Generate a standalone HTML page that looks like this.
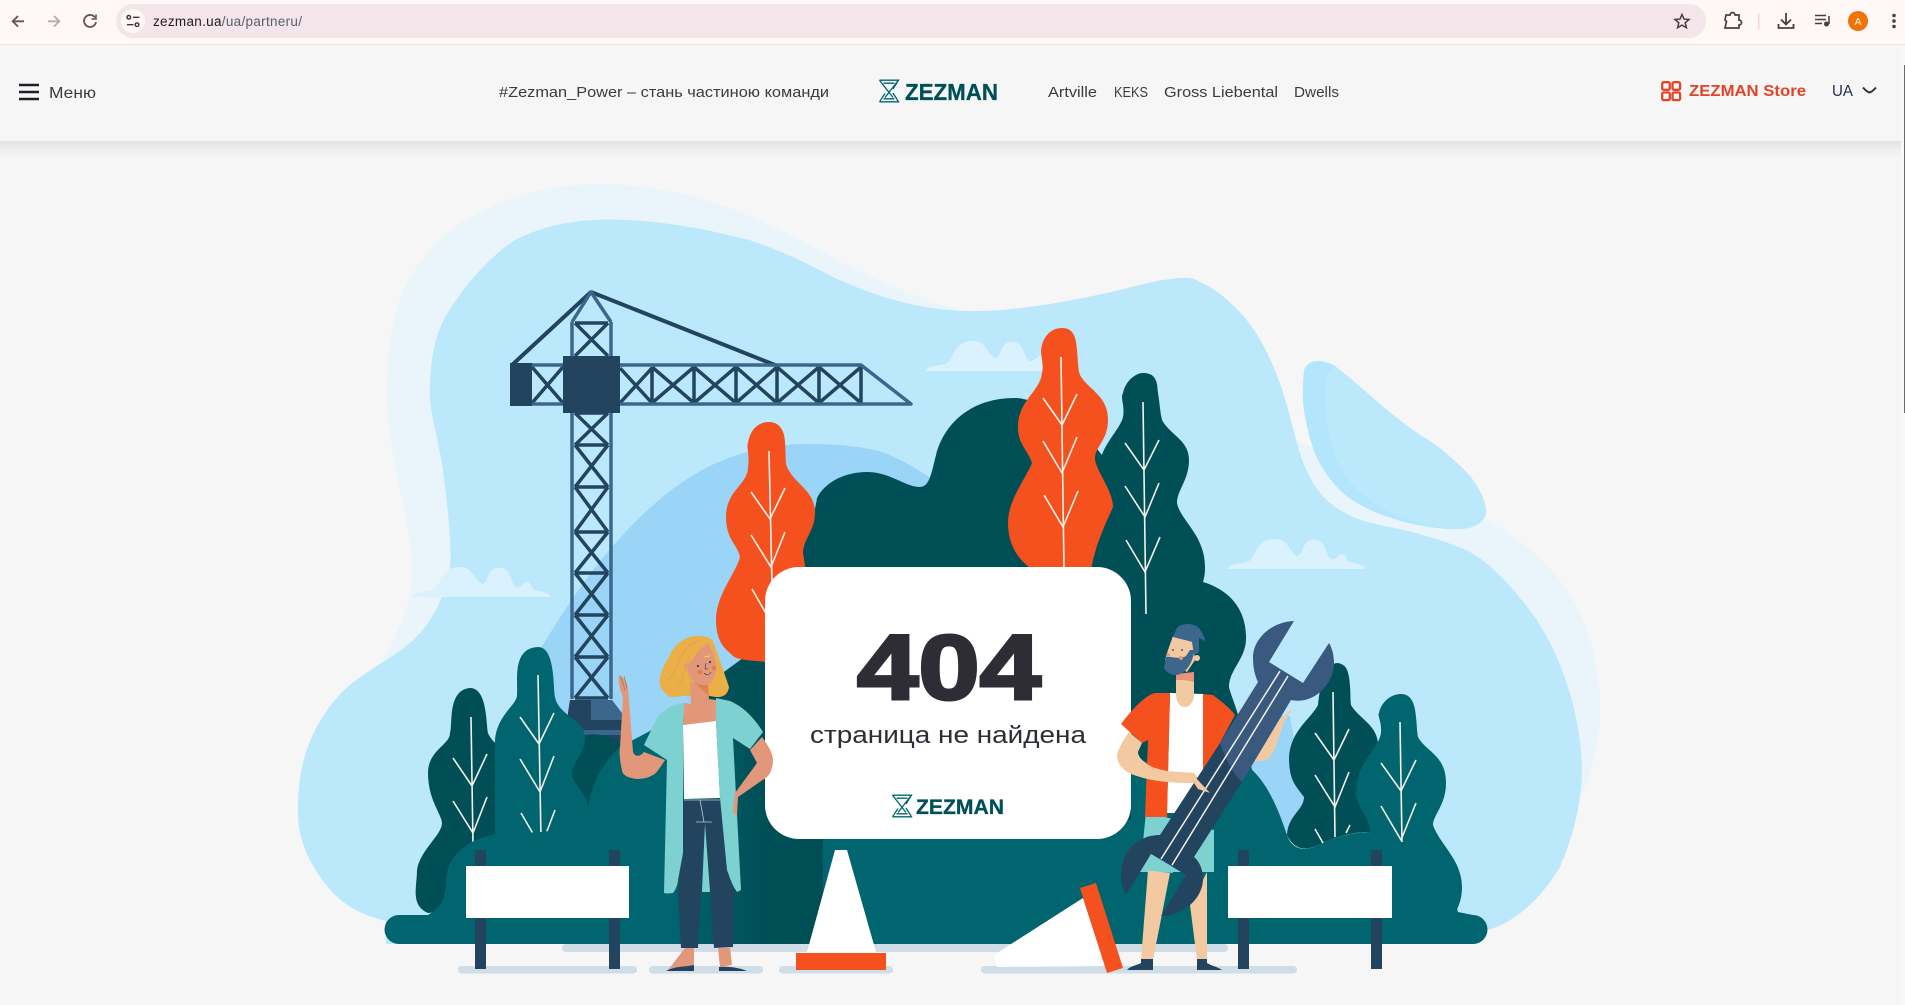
<!DOCTYPE html>
<html lang="uk"><head><meta charset="utf-8"><title>ZEZMAN 404</title>
<style>
html,body{margin:0;padding:0;background:#f6f6f6;width:1905px;height:1005px;overflow:hidden}
svg{display:block}
text{font-family:"Liberation Sans","Noto Sans CJK SC",sans-serif}
.v{fill:none;stroke:#f4f1ea;stroke-width:1.6}
.hd{font-size:15px;fill:#3b3b40}
</style></head><body>
<svg width="1905" height="1005" viewBox="0 0 1905 1005" xmlns="http://www.w3.org/2000/svg">
<defs>
<linearGradient id="sh" x1="0" y1="0" x2="0" y2="1"><stop offset="0" stop-color="#e3e3e3"/><stop offset="1" stop-color="#f6f6f6"/></linearGradient>
<linearGradient id="tg" gradientUnits="userSpaceOnUse" x1="670" y1="0" x2="760" y2="0"><stop offset="0" stop-color="#00656f"/><stop offset="1" stop-color="#004f57"/></linearGradient>
</defs>
<rect width="1905" height="1005" fill="#f6f6f6"/>

<!-- browser chrome -->
<rect width="1905" height="44" fill="#fff8f6"/>
<rect y="44" width="1905" height="1" fill="#f6dfe0"/>
<rect x="116" y="4" width="1590" height="34" rx="17" fill="#f3e5e9"/>
<g fill="none" stroke="#6a5052" stroke-width="1.8">
<path d="M24 21.3H13M18 16l-5.3 5.3 5.3 5.3"/>
<path d="M59 21.3H48M54 16l5.3 5.3-5.3 5.3" stroke="#b7abab"/>
<path d="M95 17.5a6 6 0 1 0 1 4.5"/><path d="M96 14.5v4.5h-4.5" stroke-width="1.6"/>
</g>
<circle cx="133" cy="21" r="12" fill="#fff8f6"/>
<g fill="none" stroke="#40363a" stroke-width="1.4"><circle cx="128.8" cy="17.3" r="1.8"/><path d="M133 17.3h6.5M127 24.7h6.5"/><circle cx="137" cy="24.7" r="1.8"/></g>
<text x="153" y="26" font-size="13.5" textLength="149" fill="#1f1f1f">zezman.ua<tspan fill="#5b5f6c">/ua/partneru/</tspan></text>
<path d="M1682 14.5l2 4.6 5 .4-3.8 3.3 1.2 4.9-4.4-2.6-4.4 2.6 1.2-4.9-3.8-3.3 5-.4z" fill="none" stroke="#4d3c3f" stroke-width="1.5"/>
<path d="M1726 15h4a2.500 2.500 0 0 1 5 0h4v5a2.500 2.500 0 0 1 0 5v3h-14l1.500-6.500-1.500-1.500z" fill="none" stroke="#4d3c3f" stroke-width="1.7"/>
<rect x="1758" y="13" width="1.500" height="16" fill="#f7d3da"/>
<g fill="none" stroke="#4d3c3f" stroke-width="1.8"><path d="M1786 13v11M1781 19.500l5 5 5-5M1778.500 24v4h15v-4"/></g>
<path d="M1815 15.500h11M1815 19.500h11M1815 23.500h7" stroke="#4d3c3f" stroke-width="1.500" fill="none"/>
<path d="M1829 16v8" stroke="#4d3c3f" stroke-width="1.500"/><circle cx="1826.500" cy="24" r="2.500" fill="#4d3c3f"/>
<circle cx="1858" cy="21" r="10" fill="#f27205"/>
<text x="1858" y="25" text-anchor="middle" font-size="10.500" fill="#fff">A</text>
<g fill="#4d3c3f"><circle cx="1894" cy="15.500" r="1.800"/><circle cx="1894" cy="21" r="1.800"/><circle cx="1894" cy="26.500" r="1.800"/></g>

<!-- illustration backgrounds -->
<path d="M383 660C405 620 415 590 412 558C405 500 385 440 387 384C388 340 395 305 409 279C430 245 450 225 485 210C525 190 565 184 609 184C650 186 685 193 720 205C765 220 800 240 837 260C880 282 915 298 960 310L1294 440C1370 470 1430 490 1488 521C1530 545 1570 575 1590 640C1602 680 1602 720 1596 750C1592 770 1586 785 1582 795L1400 800Z" fill="#e9f4fb"/>
<path d="M386 921C360 915 340 903 327 886C306 860 297 835 298 807C298 765 310 730 335 700C350 682 368 672 386 660C420 640 440 615 450 570C452 545 448 510 443 470C437 430 428 410 430 384C432 345 438 328 450 309C465 287 485 260 515 240C550 222 590 218 626 220C670 222 710 230 749 240C785 252 810 265 837 279C880 298 920 310 967 311C1010 312 1060 303 1102 294C1135 287 1155 280 1172 279C1190 276 1195 279 1200 282C1218 290 1232 303 1245 318C1263 340 1272 362 1281 386C1292 420 1295 440 1303 462C1311 482 1320 495 1330 503C1345 515 1360 521 1380 525C1415 532 1445 540 1470 552C1495 566 1518 594 1537 620C1565 665 1580 715 1582 768C1582 800 1574 835 1560 867C1540 900 1515 922 1488 930L1400 944L386 944Z" fill="#bce8fc"/>
<path d="M1317 361C1307 362 1304 368 1304 372C1302 385 1303 395 1303 404C1306 425 1311 445 1317 458C1328 480 1342 494 1357 503C1385 520 1430 530 1461 529C1475 528 1485 522 1486 512C1486 500 1478 486 1470 476C1455 460 1440 447 1425 438C1395 420 1360 385 1335 366C1328 362 1322 361 1317 361Z" fill="#b3e5fd"/>
<path d="M1335 366C1327 372 1325 380 1325 386C1325 410 1326 425 1330 440C1336 462 1345 478 1357 489C1372 504 1392 515 1411 521C1430 526 1448 529 1461 529C1475 528 1485 522 1486 512C1486 500 1478 486 1470 476C1455 460 1440 447 1425 438C1395 420 1360 385 1335 366Z" fill="#bce8fc"/>
<path d="M1228 568C1232 563 1243 564 1249 561C1255 557 1256 543 1268 540C1278 537 1284 540 1288 546C1292 552 1295 556 1298 556C1303 555 1302 541 1312 540C1322 539 1324 545 1326 550C1328 556 1330 560 1334 559C1338 558 1340 553 1343 554C1347 556 1346 561 1350 562C1356 563 1362 565 1365 567L1365 569H1228Z" fill="#d9f2fd"/>
<path transform="translate(-815,28)" d="M1228 568C1232 563 1243 564 1249 561C1255 557 1256 543 1268 540C1278 537 1284 540 1288 546C1292 552 1295 556 1298 556C1303 555 1302 541 1312 540C1322 539 1324 545 1326 550C1328 556 1330 560 1334 559C1338 558 1340 553 1343 554C1347 556 1346 561 1350 562C1356 563 1362 565 1365 567L1365 569H1228Z" fill="#d9f2fd"/>
<path transform="translate(-302,-198)" d="M1228 568C1232 563 1243 564 1249 561C1255 557 1256 543 1268 540C1278 537 1284 540 1288 546C1292 552 1295 556 1298 556C1303 555 1302 541 1312 540C1322 539 1324 545 1326 550C1328 556 1330 560 1334 559C1338 558 1340 553 1343 554C1347 556 1346 561 1350 562C1356 563 1362 565 1365 567L1365 569H1228Z" fill="#d9f2fd"/>

<!-- hills -->
<path d="M520 700L541 648C570 600 595 565 620 538C650 505 680 480 714 464C745 450 775 444 808 444C835 444 858 446 879 451C900 458 915 468 931 478L1000 800H520Z" fill="#9ad5f8"/>
<path d="M1220 714L1290 716L1310 830L1240 850Z" fill="#9ad5f8"/>

<!-- crane -->
<g fill="none" stroke="#23445f" stroke-width="3.500">
<path d="M591 292L512 365M591 292L775 365" stroke-width="4"/>
<path d="M575 323H608M575 413H608M575 445H608M575 487H608M575 532H608M575 573H608M575 615H608M575 657H608M575 698H608"/>
<path d="M575 323L608 356M608 323L575 356M575 413L608 445M608 413L575 445M575 445L608 487M608 445L575 487M575 487L608 532M608 487L575 532M575 532L608 573M608 532L575 573M575 573L608 615M608 573L575 615M575 615L608 657M608 615L575 657M575 657L608 698M608 657L575 698"/>
<path d="M652 367V403M694 367V403M736 367V403M777 367V403M819 367V403M861 367V403"/>
<path d="M620 368L652 403M652 368L620 403M652 367L694 403M694 367L652 403M694 367L736 403M736 367L694 403M736 367L777 403M777 367L736 403M777 367L819 403M819 367L777 403M819 367L861 403M861 367L819 403M532 367L563 403M563 367L532 403"/>
</g>
<g fill="none" stroke="#3c678d" stroke-width="3.500" stroke-linejoin="round">
<path d="M572 322V699M611 322V699M572 322L591 292L611 322"/>
<path d="M510 365H861L911 404H510"/>
</g>
<rect x="563" y="356" width="57" height="57" fill="#23445f"/>
<rect x="510" y="363" width="22" height="43" fill="#23445f"/>
<path d="M570 700H612L622 713V745H568V713Z" fill="#3c678d"/>
<path d="M570 700H591V720H568V713Z" fill="#23445f"/>
<rect x="568" y="720" width="54" height="10" fill="#23445f"/>
<rect x="568" y="735" width="54" height="12" fill="#23445f"/>

<!-- dark mass -->
<path d="M560 762L585 735C600 732 615 738 630 748L630 815H588Z" fill="#004f57"/>
<path d="M690 725L717 677L743 658L780 650L802 562C800 548 812 530 817 498C825 482 845 472 867 472C890 472 905 487 920 487C930 487 932 470 936 455C945 420 975 398 1014 398C1040 398 1060 420 1090 440L1203 582C1230 590 1247 610 1246 640C1245 660 1229 670 1229 687C1232 700 1240 712 1252 770L1252 925H690Z" fill="#004f57"/>
<rect x="1131" y="760" width="120" height="10" fill="#004f57"/>

<!-- trees left -->
<path d="M470 688C487 688 486 722 488 733C495 750 517 750 517 773C517 795 500 805 505 817L508 835L445 897Q440 913 428 913C410 905 417 887 417 870C420 850 442 835 442 823C442 815 428 800 428 773C428 750 450 745 450 733C453 725 447 690 470 688Z" fill="#004f57"/>
<path class="v" d="M471 717L473 845M453 758L472 786L487 754M453 801L473 833L487 797"/>
<path d="M538 647C555 647 553 685 555 697C558 715 585 720 585 737C585 755 570 765 572 775C574 785 588 795 588 807L588 845H495V740C497 715 517 705 517 695C518 680 512 648 538 647Z" fill="#00656f"/>
<path class="v" d="M538 675L541 839M520 717L539 744L554 713M520 759L540 792L554 756M521 813L535 837M555 810L544 839"/>

<!-- teal ground -->
<path d="M399 915H428C440 908 446 900 446 880C448 850 475 835 510 832C535 832 560 838 588 807C592 785 600 765 620 747L648 732C665 722 690 712 720 712L823 760V944H399A14.500 14.500 0 0 1 399 915Z" fill="url(#tg)"/>
<path d="M823 820H1131V760L1249 767C1270 785 1280 815 1287 835C1292 850 1305 852 1318 845C1340 835 1355 832 1375 832L1440 850L1458 912L1473 915A14.500 14.500 0 0 1 1473 944H823Z" fill="#00656f"/>

<!-- orange tree 1 -->
<path d="M769 422C782 422 785 435 785 443C786 455 785 462 787 467C795 485 815 490 815 513C815 530 803 540 803 553L820 660L767 662C745 660 735 660 730 653C720 645 716 635 716 620C716 595 735 575 740 557C738 545 726 540 726 517C726 490 748 485 748 467C750 455 746 447 748 443C750 430 758 422 769 422Z" fill="#f5511e"/>
<path class="v" d="M769 451L772 585M751 492L770 519L785 488M751 535L771 567L785 532M752 589L768 617"/>
<!-- tree 3 -->
<path d="M1143 373C1158 373 1157 385 1158 393C1160 405 1160 412 1162 420C1170 435 1189 440 1189 460C1189 480 1177 490 1177 503C1180 520 1205 535 1205 567C1205 575 1204 578 1203 582L1088 570C1092 550 1113 525 1099 490C1095 480 1099 470 1099 467C1101 445 1120 430 1123 417C1125 405 1120 398 1123 393C1125 382 1135 373 1143 373Z" fill="#004f57"/>
<path class="v" d="M1143 402L1146 614M1125 443L1144 470L1159 440M1125 486L1145 517L1159 483M1126 540L1145 572L1160 537"/>
<!-- orange tree 2 -->
<path d="M1062 328C1075 328 1076 340 1077 350C1078 362 1078 370 1080 375C1088 390 1108 395 1108 420C1108 440 1095 447 1095 458C1095 470 1113 490 1113 507C1105 525 1095 545 1090 575H1043C1030 570 1008 555 1008 523C1008 500 1025 480 1032 463C1028 450 1018 445 1018 427C1018 400 1040 392 1042 373C1044 365 1041 358 1041 350C1043 335 1052 328 1062 328Z" fill="#f5511e"/>
<path class="v" d="M1061 357L1064 570M1043 398L1062 425L1077 394M1043 441L1062 473L1077 437M1044 495L1063 527L1078 491"/>

<!-- trees right -->
<path d="M1337 663C1347 664 1348 672 1349 677C1351 690 1350 698 1351 705C1358 718 1378 725 1378 745L1370 832C1355 832 1340 835 1318 845C1308 850 1295 852 1287 835C1288 815 1304 810 1304 797C1295 785 1289 780 1289 757C1291 730 1310 720 1318 705C1320 690 1322 665 1337 663Z" fill="#004f57"/>
<path class="v" d="M1333 692L1335 837M1315 733L1334 760L1349 729M1315 775L1335 807L1349 772M1315 829L1323 843M1350 825L1346 833"/>
<path d="M1401 694C1412 694 1415 705 1416 717C1417 727 1417 732 1418 737C1426 752 1446 755 1446 783C1446 805 1433 815 1433 825C1440 845 1462 860 1462 887C1462 900 1458 908 1454 915H1340L1370 832C1370 815 1356 810 1356 790C1358 760 1378 750 1381 733C1382 722 1377 715 1379 713C1381 703 1390 694 1401 694Z" fill="#00656f"/>
<path class="v" d="M1400 722L1402 842M1381 763L1401 791L1416 760M1381 806L1401 840L1416 803"/>

<!-- ground shadows -->
<g fill="#cfdde7">
<rect x="562" y="944" width="666" height="8" rx="4"/>
<rect x="458" y="966" width="179" height="7.500" rx="3.700"/>
<rect x="649" y="966" width="114" height="7.500" rx="3.700"/>
<rect x="779" y="966" width="114" height="7.500" rx="3.700"/>
<rect x="981" y="966" width="316" height="7.500" rx="3.700"/>
</g>

<!-- cones -->
<path d="M835 850H847L876 952H807Z" fill="#fff"/>
<rect x="796" y="953" width="90" height="17" fill="#f5511e"/>
<path d="M1083 898L994 955L997 967L1105 966Z" fill="#fff"/>
<path d="M1080 888L1096 883L1123 968L1107 973Z" fill="#f5511e"/>

<!-- card -->
<rect x="765" y="567" width="366" height="272" rx="34" fill="#fff"/>
<text x="857" y="699" font-size="92" font-weight="700" textLength="184" lengthAdjust="spacingAndGlyphs" fill="#2e2d36" stroke="#2e2d36" stroke-width="3">404</text>
<text x="810" y="743" font-size="24.500" textLength="276" lengthAdjust="spacingAndGlyphs" fill="#2e2d36">страница не найдена</text>
<g transform="translate(892,794.500)" fill="none" stroke="#00656f" stroke-width="1.300"><path d="M.5 .7H19.500L14 9.500M.5 22.300H19.500L14 13.500M.5 .7L14 18M19.500 .7L6 18M.5 22.300L6 14M4.500 3.700H15.500M4.500 19.300H15.500"/></g>
<text x="916" y="814" font-size="21" font-weight="700" textLength="88" lengthAdjust="spacingAndGlyphs" fill="#004f57" stroke="#004f57" stroke-width=".3">ZEZMAN</text>

<!-- woman -->
<g>
<path d="M685 948H694L694 966L668 970ZM718 948H730L732 965L720 967Z" fill="#e2967a"/>
<path d="M666 971C675 966 685 967 694 965V971ZM719 967C730 966 740 968 747 971H719Z" fill="#23445f"/>
<path d="M683 800L721 798L734 893L733 947L714 948L705 823L698 948L681 948L678 893Z" fill="#23445f"/>
<path d="M705 823L710 892L702 892Z" fill="#7dd1d0"/>
<path d="M684 703L691 704L709 699L716 700L718 722L683 725Z" fill="#e2967a"/>
<path d="M683 725L716 721L720 798L684 799Z" fill="#fff"/>
<path d="M684 800H720M700 800L704 822M696 822H712" stroke="#b8c8d2" stroke-width="0.800" fill="none"/>
<path d="M684 703L674 705C664 710 657 716 655 722L644 745L667 760L664 893C668 894 672 893 673 893C677 888 678 882 678 880L683 853L683 725Z" fill="#7dd1d0"/>
<path d="M716 698L730 701C742 706 752 716 759 726L763 732L750 749L733 738L741 890L737 892C732 885 730 878 727 870L720 798L716 722Z" fill="#7dd1d0"/>
<path d="M619 675C622 675 627 682 628 688L633 752C635 757 640 757 644 752L665 760C660 768 655 775 653 775C648 778 642 779 637 779C628 778 622 775 622 770C620 762 619 752 620 747L623 697C620 690 618 682 619 675Z" fill="#e2967a"/>
<path d="M621 677L625 690M624 676L627 688" stroke="#a06a55" stroke-width=".6" fill="none"/>
<path d="M762 737C770 748 773 755 773 760C773 768 770 774 767 777L738 797L737 815C734 815 733 812 733 810L735 793L757 763L750 750Z" fill="#e2967a"/>
<path d="M660 678C662 668 667 660 670 655C675 643 688 635 700 636C706 636 711 638 713 641C718 655 724 672 729 687C728 694 724 697 718 697C712 697 708 695 708 696H692C686 695 677 697 671 697C664 694 658 686 660 678Z" fill="#eab045"/>
<path d="M690 682L691 705L709 699L708 686Z" fill="#e2967a"/>
<path d="M694 682L708 685L709 696Z" fill="#e07f4f"/>
<path d="M708 643C712 650 716 658 716 666C716 676 712 684 708 685C702 686 695 684 692 680C688 675 686 668 688 664C692 662 695 655 698 651C701 648 705 645 708 643Z" fill="#e2967a"/>
<circle cx="686" cy="666" r="2.200" fill="#e2967a"/>
<path d="M668 680C676 672 678 660 684 652C688 646 694 642 700 641M675 690C684 682 684 665 690 655" stroke="#e2967a" stroke-width=".7" fill="none"/>
<circle cx="698" cy="666" r="1.100" fill="#23445f"/><circle cx="710" cy="662" r="1.100" fill="#23445f"/>
<circle cx="700" cy="672" r="2.300" fill="#e07f4f"/><circle cx="714" cy="668" r="2.300" fill="#e07f4f"/>
<path d="M704 673Q708 677 711 672M706 663L705 669L708 669" fill="none" stroke="#23445f" stroke-width="0.600"/>
<path d="M704 657L710 656" stroke="#f5d44a" stroke-width="1.200"/>
</g>

<!-- man -->
<g>
<path d="M1146 812L1214 830V872H1140Z" fill="#7dd1d0"/>
<path d="M1148 870L1170 873L1153 960H1141Z" fill="#f2c9a0"/>
<path d="M1190 905L1207 872L1207 960H1197Z" fill="#f2c9a0"/>
<path d="M1141 959H1153V970H1127C1130 966 1138 965 1141 963Z" fill="#23445f"/>
<path d="M1197 959H1207V963C1212 966 1218 967 1222 970H1197Z" fill="#23445f"/>
<path d="M1293 708L1284 722C1278 740 1275 750 1270 757C1265 762 1255 762 1248 760L1265 730L1284 716Z" fill="#f2c9a0"/>
<path d="M1170 693L1203 694V770L1178 813H1167Z" fill="#fff"/>
<path d="M1170 693L1155 693C1145 695 1130 712 1121 724L1142 743L1148 740L1145 817H1167Z" fill="#f5511e"/>
<path d="M1203 694L1213 695C1222 702 1230 708 1235 715L1220 743L1203 770Z" fill="#f5511e"/>
<path d="M1176 677H1194V693L1194 697C1192 705 1188 707 1185 707C1180 707 1176 703 1176 693Z" fill="#f2c9a0"/>
<path d="M1176 674L1194 672V682C1188 680 1182 680 1176 680Z" fill="#e8947a"/>
<path d="M1129 732C1120 745 1117 752 1117 757C1118 765 1124 770 1129 773C1140 778 1155 781 1167 782C1178 783 1188 783 1194 783L1210 793L1194 773C1185 772 1176 772 1167 771C1158 769 1150 767 1146 763C1140 759 1138 755 1138 752L1142 743Z" fill="#f2c9a0"/>
<path d="M1173 636L1193 640L1195 660L1187 672L1165 660L1168 650Z" fill="#f2c9a0"/>
<path d="M1166 657L1164 668C1166 672 1171 675 1175 675C1182 675 1188 670 1192 660L1195 650L1190 650L1186 656C1180 660 1172 656 1166 657Z" fill="#3c678d"/>
<path d="M1173 637C1175 632 1177 628 1177 628C1180 625 1184 624 1187 624C1193 624 1197 626 1199 628C1202 632 1205 638 1205 641L1199 638L1199 652L1194 655L1192 642C1186 640 1180 639 1173 637Z" fill="#3c678d"/>
<circle cx="1197" cy="658" r="3" fill="#f2c9a0"/>
<circle cx="1168" cy="655" r="1.800" fill="#e8947a"/><circle cx="1181" cy="658" r="2" fill="#e8947a"/>
<circle cx="1173" cy="650" r="0.900" fill="#23445f"/><circle cx="1182" cy="650" r="0.900" fill="#23445f"/>
</g>

<!-- wrench -->
<path d="M1220 743L1242 782L1194 857C1200 862 1203 870 1203 880C1202 900 1182 916 1161 916L1186 875L1151 854L1126 895C1118 880 1120 860 1130 848C1140 838 1150 835 1160 835Z" fill="#23445f"/>
<path d="M1151 854L1173 867L1173 873L1142 870Z" fill="#7dd1d0"/>
<path d="M1294 621C1270 622 1253 640 1253 657C1253 668 1255 676 1258 682L1220 743C1226 760 1232 772 1242 782L1291 700C1315 705 1334 683 1334 663C1334 655 1332 648 1329 643L1303 683L1269 662Z" fill="#39597f"/>
<path d="M1280 671L1161 859M1288 676L1172 865" stroke="#f4f1ea" stroke-width="1.500" fill="none"/>
<path d="M1196 778L1210 793L1198 789L1194 783Z" fill="#f2c9a0"/>

<!-- signs -->
<g fill="#23445f">
<rect x="475" y="850" width="11" height="119"/><rect x="609" y="850" width="11" height="119"/>
<rect x="1238" y="850" width="11" height="119"/><rect x="1371" y="850" width="11" height="119"/>
</g>
<rect x="466" y="866" width="163" height="52" fill="#fff"/>
<rect x="1228" y="866" width="164" height="52" fill="#fff"/>

<!-- site header -->
<rect y="141" width="1901" height="16" fill="url(#sh)"/>
<rect y="45" width="1905" height="96" fill="#f6f6f6"/>
<path d="M19 85H39M19 92H39M19 99H39" stroke="#1f1f26" stroke-width="2.400" fill="none"/>
<text x="49" y="98" font-size="16" textLength="47" lengthAdjust="spacingAndGlyphs" fill="#3b3b40">Меню</text>
<text class="hd" x="499" y="97" textLength="330" lengthAdjust="spacingAndGlyphs">#Zezman_Power – стань частиною команди</text>
<g transform="translate(879,79.500)" fill="none" stroke="#00656f" stroke-width="1.300"><path d="M.5 .7H19.500L14 9.500M.5 22.300H19.500L14 13.500M.5 .7L14 18M19.500 .7L6 18M.5 22.300L6 14M4.500 3.700H15.500M4.500 19.300H15.500"/></g>
<text x="905" y="100" font-size="23" font-weight="700" textLength="93" lengthAdjust="spacingAndGlyphs" fill="#004f57" stroke="#004f57" stroke-width=".3">ZEZMAN</text>
<text class="hd" x="1048" y="97" textLength="49" lengthAdjust="spacingAndGlyphs">Artville</text>
<text class="hd" x="1114" y="97" textLength="34" lengthAdjust="spacingAndGlyphs">KEKS</text>
<text class="hd" x="1164" y="97" textLength="114" lengthAdjust="spacingAndGlyphs">Gross Liebental</text>
<text class="hd" x="1294" y="97" textLength="45" lengthAdjust="spacingAndGlyphs">Dwells</text>
<g fill="none" stroke="#e2442a" stroke-width="2.300"><rect x="1662.200" y="82.200" width="7.600" height="7.600" rx="1.500"/><rect x="1672.500" y="82.200" width="7.600" height="7.600" rx="1.500"/><rect x="1662.200" y="92.500" width="7.600" height="7.600" rx="1.500"/><rect x="1672.500" y="92.500" width="7.600" height="7.600" rx="1.500"/></g>
<text x="1689" y="96" font-size="16" font-weight="700" textLength="117" lengthAdjust="spacingAndGlyphs" fill="#e2442a">ZEZMAN Store</text>
<text x="1832" y="96" font-size="16" textLength="21" lengthAdjust="spacingAndGlyphs" fill="#22304a">UA</text>
<path d="M1863 87.500Q1867 92 1869.500 92.500Q1872 92 1876 87.500" fill="none" stroke="#333" stroke-width="2"/>

<!-- scrollbar -->
<rect x="1901" y="45" width="4" height="960" fill="#f8f8f8"/>
<rect x="1904" y="65" width="1" height="348" fill="#6b6b6b"/>
</svg>
</body></html>
